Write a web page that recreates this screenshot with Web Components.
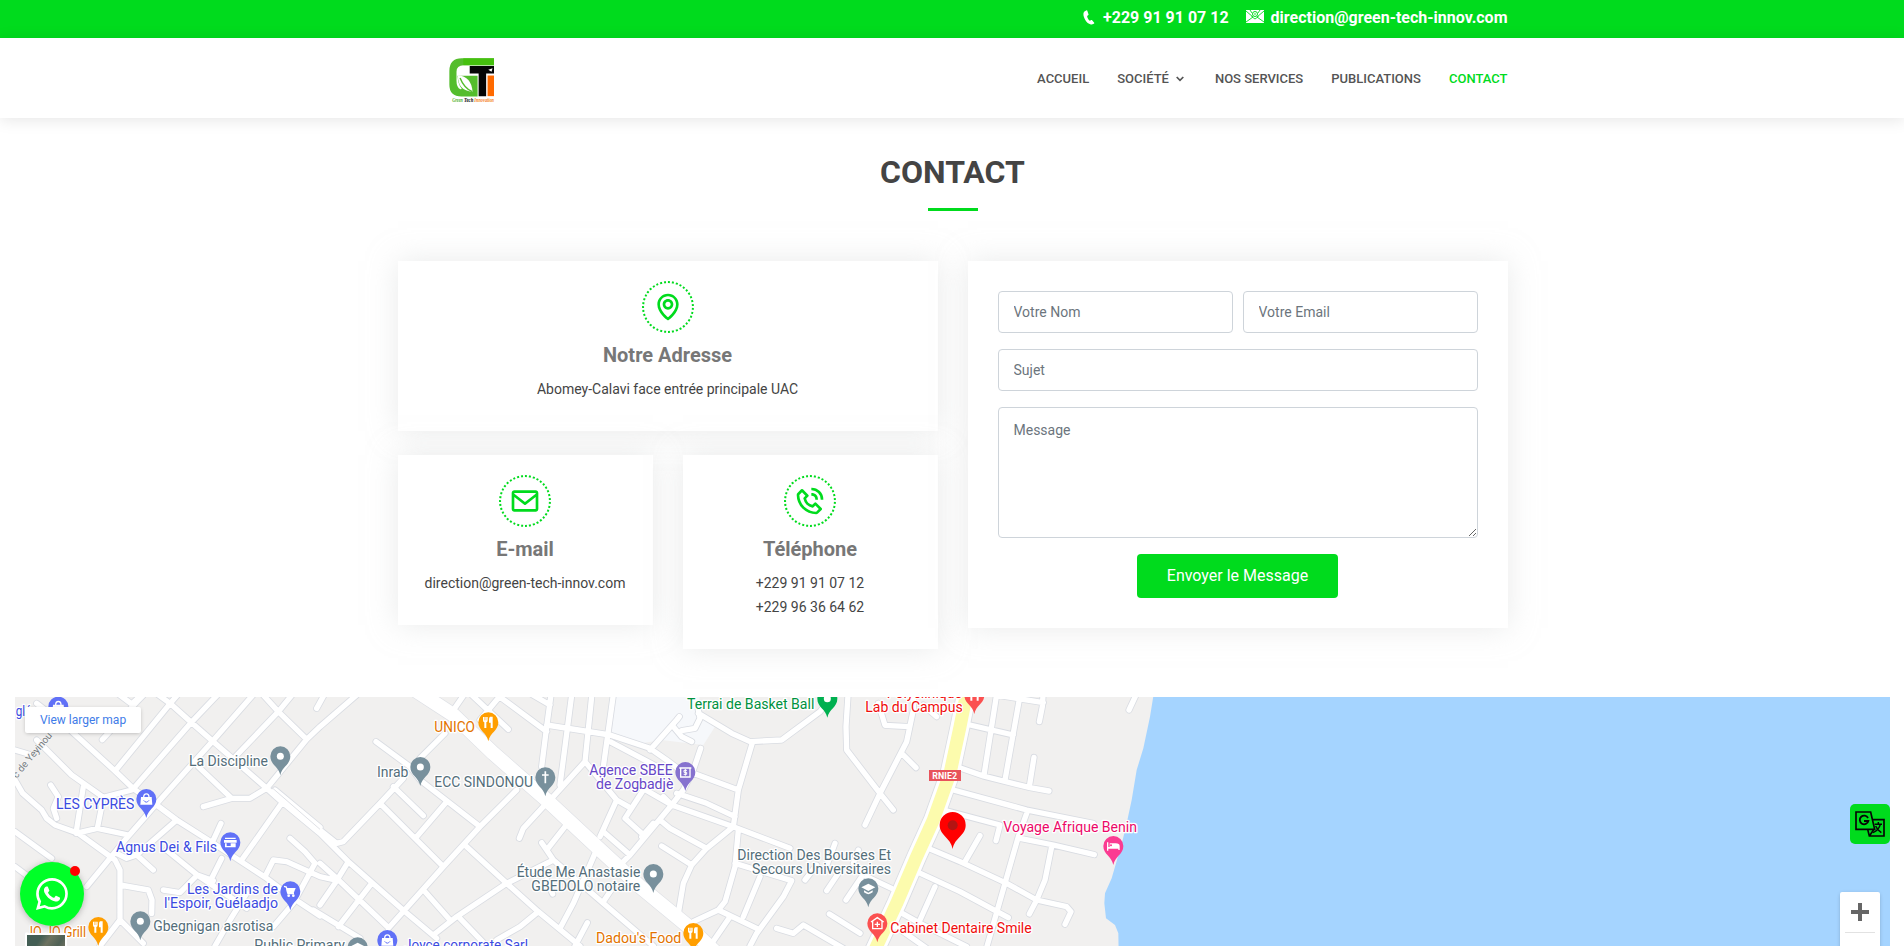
<!DOCTYPE html>
<html lang="fr">
<head>
<meta charset="utf-8">
<title>Green Tech Innovation - Contact</title>
<style>
html{overflow:hidden}
body{margin:0;width:1905px;height:946px;overflow:hidden;background:#fff;color:#444;font:14px/24px Roboto,"Open Sans",sans-serif}
</style>
</head>
<body>
<contact-page></contact-page>
<script>
const GREEN = '#00db1d';
function define(name, render){
  customElements.define(name, class extends HTMLElement{
    connectedCallback(){
      if(this.shadowRoot) return;
      this.attachShadow({mode:'open'}).innerHTML = render(this);
    }
  });
}

define('top-bar', () => `<style>
:host{display:block;height:38px;background:${GREEN};color:#fff}
.in{width:1110px;height:28px;margin:0 auto;display:flex;justify-content:flex-end;align-items:center;font-weight:700;font-size:16px;line-height:28px;padding-top:4px}
svg{flex:none;display:block}
.p{margin:-1px 8px 0 0}.m{margin:-4px 7px 0 17px}
</style><div class="in">
<svg class="p" width="12" height="15" viewBox="0 0 12 15" fill="#fff"><path d="M3.6.3 1.4 1.4C.2 2.2.1 4.700 1 7.300c1.200 3.700 4 6.600 6.800 7.200.8.1 1.800-.1 3.300-1l.3-.5-2.500-3-.6-.1-1.500.9C5.500 10.100 4.300 7.600 4.100 5.900l1.300-.8.2-.5L4.200.5z"/></svg><span>+229 91 91 07 12</span>
<svg class="m" width="18" height="13" viewBox="0 0 18 13"><path fill="#fff" d="M0 0h18v13H0z"/><path d="m0 1 7 6-7 5M18 1l-7 6 7 5M5.500 6.500 9 9l3.500-2.500M4 0l2 3M14 0l-2 3" fill="none" stroke="${GREEN}" stroke-width=".9"/><circle cx="9" cy="4" r="2.500" fill="none" stroke="${GREEN}"/><circle cx="9" cy="4" r=".8" fill="${GREEN}"/></svg><span>direction@green-tech-innov.com</span></div>`);

define('gti-logo', () => `<style>:host{display:block;width:45px;height:45px}svg{display:block;overflow:visible}</style>
<svg width="45" height="45" viewBox="0 0 126 131" preserveAspectRatio="none">
<path d="M126 1H36Q1 1 1 38v40q0 34 34 34h45V52H24q1 26 12 38l-4 1Q21 86 21 66V40q0-19 20-19h85z" fill="#54bd2c"/>
<path d="M40 1h86v20H40z" fill="#45c00e"/><path d="M25 50q38 4 41 48-42-3-41-48z" fill="#fff"/><path d="M31 58q11 29 34 40" fill="none" stroke="#54bd2c" stroke-width="4"/>
<path d="M58 23h68v22h-22v66H83V45H58z" fill="#050505"/><path d="M108 51h18v60h-18z" fill="#ff6a00"/><path d="m110 34 12-4-3 10z" fill="#fff"/>
<g font-family="Liberation Serif,serif" font-style="italic" font-weight="700" font-size="15"><text x="9" y="127" textLength="30" lengthAdjust="spacingAndGlyphs" fill="#4fae25">Green</text><text x="42" y="127" textLength="26" lengthAdjust="spacingAndGlyphs" fill="#000">Tech</text><text x="71" y="127" textLength="55" lengthAdjust="spacingAndGlyphs" fill="#f58220">Innovation</text></g></svg>`);

define('nav-link', el => `<style>:host{display:flex;align-items:center;margin-left:28px;padding-top:2px;font-size:13px;line-height:16px;font-weight:500;text-transform:uppercase;color:#545454;white-space:nowrap}
:host([active]){color:${GREEN}}svg{margin:0 3px 0 7px}</style><slot></slot>${el.hasAttribute('menu')?'<svg width="8" height="6" viewBox="0 0 8 6"><path d="m.7 1 3.300 3.300L7.300 1" fill="none" stroke="currentColor" stroke-width="1.700"/></svg>':''}`);

define('site-header', () => `<style>
:host{display:block;height:80px;background:#fff;box-shadow:0 2px 15px rgba(0,0,0,.1);position:relative}
.in{width:1110px;height:80px;margin:0 auto;display:flex;align-items:center}
gti-logo{margin:5px auto 0 51.500px}
</style><div class="in"><gti-logo></gti-logo><nav-link>Accueil</nav-link><nav-link menu>Société</nav-link><nav-link>Nos Services</nav-link><nav-link>Publications</nav-link><nav-link active>Contact</nav-link></div>`);

define('section-title', () => `<style>
:host{display:flex;flex-direction:column;align-items:center}
h2{margin:0;font-size:32px;line-height:38px;font-weight:700;text-transform:uppercase}
i{width:50px;height:3px;background:${GREEN};margin-top:17px}
</style><h2><slot></slot></h2><i></i>`);

const ICONS = {
 map:'M12 14c2.206 0 4-1.794 4-4s-1.794-4-4-4-4 1.794-4 4 1.794 4 4 4zm0-6c1.103 0 2 .897 2 2s-.897 2-2 2-2-.897-2-2 .897-2 2-2zM11.420 21.814a.998.998 0 0 0 1.160 0C12.884 21.599 20.029 16.440 20 10c0-4.411-3.589-8-8-8S4 5.589 4 9.995c-.029 6.445 7.116 11.604 7.420 11.819zM12 4c3.309 0 6 2.691 6 6.005.021 4.438-4.388 8.423-6 9.730-1.611-1.308-6.021-5.294-6-9.735 0-3.309 2.691-6 6-6z',
 mail:'M20 4H4c-1.103 0-2 .897-2 2v12c0 1.103.897 2 2 2h16c1.103 0 2-.897 2-2V6c0-1.103-.897-2-2-2zm0 2v.511l-8 6.223-8-6.222V6h16zM4 18V9.044l7.386 5.745a.994.994 0 0 0 1.228 0L20 9.044 20.002 18H4z',
 phone:'M16.570 22a2 2 0 0 0 1.430-.59l2.710-2.710a1 1 0 0 0 0-1.410l-4-4a1 1 0 0 0-1.410 0l-1.600 1.590a7.550 7.550 0 0 1-3-1.590 7.620 7.620 0 0 1-1.590-3l1.590-1.600a1 1 0 0 0 0-1.410l-4-4a1 1 0 0 0-1.410 0L2.590 6A2 2 0 0 0 2 7.430 15.280 15.280 0 0 0 6.300 17.700 15.280 15.280 0 0 0 16.570 22zM6 5.410L8.590 8 7.300 9.290a1 1 0 0 0-.3.910 10.120 10.120 0 0 0 2.300 4.500 10.080 10.080 0 0 0 4.500 2.300 1 1 0 0 0 .910-.270L16 15.410 18.590 18l-2 2a13.280 13.280 0 0 1-8.870-3.710A13.280 13.280 0 0 1 4 7.410zM20 11h2a8.810 8.810 0 0 0-9-9v2a6.770 6.770 0 0 1 7 7zM13 8c2.100 0 3 .9 3 3h2c0-3.220-1.780-5-5-5z'
};
define('info-card', el => `<style>
:host{display:flex;flex-direction:column;align-items:center;padding:20px 0 30px;background:#fff;box-shadow:0 0 27px rgba(214,215,216,.5);text-align:center}
.c{box-sizing:border-box;width:52px;height:52px;border:2px dotted ${GREEN};border-radius:50%;padding:8px}
svg{display:block}
h3{margin:10px 0;font-size:20px;line-height:24px;font-weight:700;color:#777}
</style><div class="c"><svg width="32" height="32" viewBox="0 0 24 24" fill="${GREEN}"><path d="${ICONS[el.getAttribute('icon')]}"/></svg></div><h3>${el.getAttribute('heading')}</h3><slot></slot>`);

define('contact-form', () => `<style>
:host{display:block;box-sizing:border-box;background:#fff;padding:30px;box-shadow:0 0 27px rgba(214,215,216,.5)}
form{display:grid;grid-template-columns:1fr 1fr;column-gap:10px;row-gap:16px}
input,textarea{box-sizing:border-box;width:100%;margin:0;border:1px solid #ced4da;border-radius:4px;font:14px/21px Roboto,sans-serif;color:#495057;background:#fff;display:block;outline:0}
input{height:42px;padding:6px 15px}
textarea{height:131px;padding:12px 15px}
::placeholder{color:#6c757d;opacity:1}
.w{grid-column:1/3}
button{grid-column:1/3;justify-self:center;height:44px;padding:10px 30px;border:0;border-radius:4px;background:${GREEN};color:#fff;font:16px/24px Roboto,sans-serif}
</style><form><input placeholder="Votre Nom"><input placeholder="Votre Email"><input class="w" placeholder="Sujet"><textarea class="w" placeholder="Message"></textarea><button type="button">Envoyer le Message</button></form>`);

/* Street map. One map unit is a third of a pixel. */
const ROADS = [
 // west
 'M110 40 195 106 345 243 400 296 470 345 530 390 640 460 800 565 880 625 960 678',
 'M455 0 510 40 575 98 640 155 800 295 845 335 960 430 1045 515 1215 665 1310 745',
 'M307 149 410 36 440 5','M400 296 575 96 655 12','M260 590 375 450 470 341 640 151 765 8',
 'M355 12 395 42 430 10','M345 243 510 41 545 0',
 'M110 150 215 255 310 322 395 300','M45 180 95 195','M45 270 68 310 125 360 140 385 165 405 235 430 345 510 360 540 360 690',
 'M152 285 175 320 160 355 170 385','M250 290 228 430 292 415 385 435','M310 325 292 415',
 'M45 425 155 505','M45 530 85 560','M350 490 380 505 410 495 460 540','M410 495 530 390',
 'M360 585 445 600 456 630 455 670','M490 600 540 608 592 555 640 572','M500 480 592 555 740 655','M663 400 640 450','M665 505 630 575',
 'M610 350 695 325 750 325 800 295 920 148 960 110 1070 15','M595 230 695 325','M785 10 835 65 920 148','M708 198 835 65 880 10',
 'M845 340 725 510','M870 445 915 485 945 520 880 640 820 710','M795 560 820 510 860 515 960 560 1005 570','M825 300 960 412',
 'M740 610 690 690 645 768','M300 768 360 690 430 760','M950 55 975 10',
 // centre west
 'M1350 75 1395 10','M1335 130 1260 205','M1410 10 1525 118','M1515 0 1440 90','M1500 21 1640 125','M1590 10 1650 45',
 'M1655 0 1640 110 1625 230','M1717 0 1680 285','M1777 0 1755 215 1655 325','M1842 0 1810 230',
 'M1640 105 1830 135 1950 175 2000 210 2040 240','M1830 155 1925 205 1990 240','M1755 215 1850 330 1885 350','M1850 330 1800 440',
 'M1930 300 1875 385 1925 430','M1810 425 1890 495','M1990 320 2015 345 1890 495 1865 520',
 'M1128 155 1230 230 1260 270 1440 410','M1180 290 1270 377','M1210 265 1140 340 1030 455 1010 460 960 420',
 'M1140 340 1330 530','M1340 335 1250 440','M1550 300 1440 410 1330 530 1165 715','M1400 470 1520 580 1615 665 1740 768',
 'M1630 350 1570 415 1558 445','M1695 410 1640 480 1625 458','M1640 480 1660 510 1520 580 1370 680 1300 735','M1660 510 1810 640 1960 768',
 'M1785 490 1720 640 1680 715','M1810 635 1840 590','M960 520 1005 560 1160 708','M1045 515 1005 580 960 645','M1115 580 1015 710','M940 660 1080 745',
 'M1275 605 1350 690','M1375 680 1460 768','M1615 665 1560 710 1490 750','M1762 698 1725 768','M1640 570 1658 612',
 // campus
 'M2095 70 2195 130 2250 155 2345 150 2460 65 2480 40','M1950 180 2030 90 2038 80','M2020 110 2045 140 2075 155','M2045 122 2085 115 2100 85 2095 60',
 'M2258 155 2215 300 2200 410','M2102 175 2080 240 2050 300 2015 345','M2080 250 2215 300','M1920 290 2015 345 2200 410 2370 475',
 'M2030 310 2120 340 2205 380','M1980 390 2010 415 2120 475','M2200 410 2120 475 2075 525 2050 580 2035 670','M1985 468 2075 525','M1925 440 1960 400',
 'M2215 420 2205 530 2175 635 2155 660 2080 695','M2205 520 2375 572 2350 620 2270 730 2250 768','M2280 560 2230 680','M2155 660 2270 715','M2190 680 2130 768',
 'M2505 460 2475 540','M2415 570 2450 525','M2480 602 2515 550','M2538 630 2585 560','M2575 480 2560 520','M2600 560 2675 595','M2488 672 2580 730','M2330 715 2380 730 2410 705 2530 775',
 'M2545 0 2538 110 2540 180 2640 310 2680 360','M2740 0 2740 60 2720 155 2640 310 2595 405','M2705 190 2748 233','M2635 40 2655 106 2728 110','M2770 45 2810 80',
 // lake side
 'M2992 0 2952 255','M3063 0 3015 270','M2990 15 3130 38','M3130 0 3127 50 3118 95','M2910 105 3040 135',
 'M2870 230 2950 258 3090 293 3147 303','M3102 202 3088 290','M3415 0 3387 60','M2860 300 3080 360 3280 400','M2830 360 3000 405 2988 452',
 'M2940 437 2895 515','M2785 475 2880 515 3020 580 3110 630 3200 650 3213 665 3195 703','M3080 370 3055 440 3015 580 2955 790','M3060 445 3160 465 3283 494',
 'M3155 470 3135 570 3110 630 3088 672','M2750 545 2880 605 3025 683','M2805 590 2760 690','M2680 655 2760 700 2900 770','M2660 690 2780 775'
].join('');
const PIN = 'M0 57C-5 30-30 26-30 0A30 30 0 0 1 30 0C30 26 5 30 0 57Z';
const GL = {
 dot:'<circle r="10.500" fill="#fff"/>',
 bag:'<path fill="#fff" d="M-16-6h32l2 23h-36z"/><path d="M-8-5c0-14 16-14 16 0" fill="none" stroke="#fff" stroke-width="4"/><path d="M-8 4q8 11 16 0" fill="none" stroke="#6171f7" stroke-width="3"/>',
 shop:'<path fill="#fff" d="M-16-14h32v4h-32zM-19-7h38v8h-38zM-16 3h5v8H1V3h15v12h-32z"/>',
 cart:'<path fill="#fff" d="M-12-10h28l-6 16h-20z"/><path d="m-19-15 7 2 5 20h18" fill="none" stroke="#fff" stroke-width="4"/><circle cx="-5" cy="13" r="4" fill="#fff"/><circle cx="9" cy="13" r="4" fill="#fff"/>',
 fork:'<path fill="#fff" d="M-16-16h14v10q0 6-4 6v17h-6V0q-4 0-4-6zM5-17h8v34H7V1H2v-11q0-5 3-7z"/><path d="M-11-16v10M-7-16v10" stroke="#ff9e00" stroke-width="1.500"/>',
 cross:'<path d="M0-18v36M-10-7h20" stroke="#fff" stroke-width="5"/>',
 grad:'<path fill="#fff" d="m0-14 21 11L0 8l-21-11zM-13 6 0 13 13 6v6Q0 23-13 12z"/>',
 bank:'<path d="M-14-12v27h28v-27M-18-12h36" fill="none" stroke="#fff" stroke-width="4"/><path d="M5-5h-9v6h8v6h-9M0-9v20" fill="none" stroke="#fff" stroke-width="3"/>',
 med:'<path d="M-14-6v22h28V-6M-19-4 0-17 19-4" fill="none" stroke="#fff" stroke-width="4"/><path d="M0-5v16M-8 3H8" stroke="#fff" stroke-width="4"/>',
 bed:'<path fill="#fff" d="M-19-11h4V3h4v-11h18q12 0 12 8v12h-4V8h-30v6h-4z"/><circle cx="-7" cy="-2" r="3" fill="#fb3b92"/>'
};
const C={grey:['#78909c','#546e7a'],blue:['#6171f7','#3c4bdf'],orange:['#ff9e00','#e37400'],violet:['#8672cf','#6747c7'],green:['#00b050','#00923f'],red:['#fb5050','#ef0d0d'],pink:['#fb3b92','#ec0868']};
const PINS=[[175,50,'blue','bag'],[841,199,'grey','dot'],[439,327,'blue','bag'],[691,457,'blue','shop'],[871,604,'blue','cart'],[421,694,'grey','dot'],[295,711,'orange','fork'],
[1465,97,'orange','fork'],[1261,231,'grey','dot'],[1636,262,'grey','cross'],[1073,772,'grey','grad'],[1162,750,'blue','bag'],[2482,26,'green','dot'],[2056,246,'violet','bank'],
[1960,552,'grey','dot'],[2080,729,'orange','fork'],[2605,595,'grey','grad'],[2632,700,'red','med'],[2923,15,'red','fork'],[3340,468,'pink','bed']];
const LABELS=[[47,79,65,'blue','glés'],[567,228,237,'grey','La Discipline'],[168,357,235,'blue','LES CYPRÈS'],[348,486,303,'blue','Agnus Dei &amp; Fils'],[561,612,273,'blue','Les Jardins de'],[492,654,342,'blue',"l'Espoir, Guélaadjo"],
[460,724,360,'grey','Gbegnigan asrotisa'],[78,741,180,'orange','JO JO Grill'],[763,780,272,'grey','Public Primary'],[1303,126,162,'orange','UNICO'],[1131,261,94,'grey','Inrab'],[1303,291,296,'grey','ECC SINDONOU'],
[1768,256,250,'violet','Agence SBEE'],[1788,297,232,'violet','de Zogbadjè'],[1550,561,371,'grey','Étude Me Anastasie'],[1594,603,327,'grey','GBEDOLO notaire'],[1212,780,372,'blue','Joyce corporate Sarl'],[1788,759,256,'orange',"Dadou's Food"],
[2061,57,382,'green','Terrai de Basket Ball'],[2660,24,226,'red','Polyclinique'],[2596,66,292,'red','Lab du Campus'],[2212,510,461,'grey','Direction Des Bourses Et'],[2256,552,417,'grey','Secours Universitaires'],[2671,729,424,'red','Cabinet Dentaire Smile'],[3010,426,401,'pink','Voyage Afrique Benin']];
LABELS.find(l=>l[4]==='UNICO')[2]=122;

define('street-map', () => `<style>:host{display:block}svg{display:block}</style>
<svg width="1875" height="249" viewBox="45 21 5625 747" font-family="Roboto,sans-serif">
<rect x="45" y="21" width="5625" height="747" fill="#f1f0ef"/>
<path d="M1845 0 1835 130 1925 160 1985 150 2110 165 2145 110 2095 65 2100 0Z" fill="#f6f8fb"/>
<path d="M3463 0 3450 80 3430 175 3410 240 3395 330 3380 400 3368 450 3345 530 3335 565 3315 610 3313 640 3318 685 3345 705 3355 730 3356 790H5700V0Z" fill="#a5d4ff"/>
<g fill="none" stroke-linecap="round" stroke-linejoin="round">
<path d="${ROADS}" stroke="#d9dce2" stroke-width="21"/>
<path d="M1245 0 1360 75 1480 190 1640 330 1790 470 1920 590 2060 705 2150 790" stroke="#dfe1e6" stroke-width="46"/>
<path d="M2902 0 2880 110 2850 250 2800 390 2750 500 2690 640 2620 790" stroke="#d9dce2" stroke-width="62"/>
<path d="${ROADS}" stroke="#fff" stroke-width="16"/>
<path d="M1245 0 1360 75 1480 190 1640 330 1790 470 1920 590 2060 705 2150 790" stroke="#fff" stroke-width="42"/>
<path d="M2902 0 2880 110 2850 250 2800 390 2750 500 2690 640 2620 790" stroke="#fff" stroke-width="57"/>
<path d="M2902 0 2880 110 2850 250 2800 390 2750 500 2690 640 2620 790" stroke="#fcfbad" stroke-width="39"/></g>
<path d="M815 292 960 418" stroke="#dfe1e6" stroke-width="3"/>
<rect x="2787" y="240" width="96" height="33" fill="#e8535b"/><text x="2797" y="266" font-size="25" font-weight="700" fill="#fff" textLength="74" lengthAdjust="spacingAndGlyphs">RNIE2</text>
<text transform="translate(50 266) rotate(-50)" font-size="30" fill="#757b80" textLength="168" lengthAdjust="spacingAndGlyphs" stroke="#f5f5f5" stroke-width="5" paint-order="stroke">c de Yeyinou</text>
${PINS.map(p=>`<g transform="translate(${p[0]} ${p[1]})"><path d="${PIN}" fill="${C[p[2]][0]}"/>${GL[p[3]]}</g>`).join('')}
<g font-size="44" stroke="#fff" stroke-width="8" stroke-linejoin="round" paint-order="stroke">${LABELS.map(l=>`<text x="${l[0]}" y="${l[1]}" textLength="${l[2]}" lengthAdjust="spacingAndGlyphs" fill="${C[l[3]][1]}">${l[4]}</text>`).join('')}</g>
<path d="M2858 477C2852 442 2819 438 2819 405A39 39 0 0 1 2897 405C2897 438 2864 442 2858 477Z" fill="#f00"/><circle cx="2858" cy="406" r="15" fill="#b31412"/>
</svg>`);

define('map-panel', () => `<style>
:host{display:block;position:relative;margin:0 15px;height:249px}
.big{position:absolute;left:10px;top:10px;width:116px;height:26px;background:#fff;border-radius:2px;box-shadow:0 1px 4px -1px rgba(0,0,0,.3);color:#3f7ce8;font-size:12px;line-height:26px;text-align:center}
.sat{position:absolute;box-sizing:border-box;left:10px;top:236px;width:42px;height:40px;border:2px solid #fff;border-radius:2px;background:linear-gradient(125deg,#435e54 0 25%,#6d7260 40%,#4f6155 60%,#8b7c69 85%)}
.zoom{position:absolute;left:1825px;top:195px;width:40px;height:81px;background:#fff;border-radius:2px;box-shadow:0 1px 4px -1px rgba(0,0,0,.3)}
.zoom svg{display:block}
</style><street-map></street-map><div class="big">View larger map</div><div class="sat"></div>
<div class="zoom"><svg width="40" height="54" viewBox="0 0 40 54"><path d="M18 11h4v7h7v4h-7v7h-4v-7h-7v-4h7z" fill="#666"/><path d="M5 40h30v1H5z" fill="#e2e2e2"/></svg></div>`);

define('whatsapp-button', () => `<style>
:host{position:absolute;left:20px;top:862px;width:64px;height:64px;border-radius:50%;background:#00ff28;box-shadow:0 1px 6px rgba(60,60,60,.35);display:flex;align-items:center;justify-content:center}
b{position:absolute;left:50px;top:4px;width:10px;height:10px;border-radius:50%;background:#f00}
</style><svg width="32" height="32" viewBox="0 0 16 16" fill="#fff"><path d="M13.601 2.326A7.854 7.854 0 0 0 7.994 0C3.627 0 .068 3.558.064 7.926c0 1.399.366 2.760 1.057 3.965L0 16l4.204-1.102a7.933 7.933 0 0 0 3.790.965h.004c4.368 0 7.926-3.558 7.930-7.930A7.898 7.898 0 0 0 13.600 2.326zM7.994 14.521a6.573 6.573 0 0 1-3.356-.920l-.240-.144-2.494.654.666-2.433-.156-.251a6.560 6.560 0 0 1-1.007-3.505c0-3.626 2.957-6.584 6.591-6.584a6.560 6.560 0 0 1 4.660 1.931 6.557 6.557 0 0 1 1.928 4.660c-.004 3.639-2.961 6.592-6.592 6.592zm3.615-4.934c-.197-.099-1.170-.578-1.353-.646-.182-.065-.315-.099-.445.099-.133.197-.513.646-.627.775-.114.133-.232.148-.430.050-.197-.100-.836-.308-1.592-.985-.590-.525-.985-1.175-1.103-1.372-.114-.198-.011-.304.088-.403.087-.088.197-.232.296-.346.100-.114.133-.198.198-.330.065-.134.034-.248-.015-.347-.050-.099-.445-1.076-.612-1.470-.160-.389-.323-.335-.445-.340-.114-.007-.247-.007-.380-.007a.729.729 0 0 0-.529.247c-.182.198-.691.677-.691 1.654 0 .977.710 1.916.810 2.049.098.133 1.394 2.132 3.383 2.992.470.205.840.326 1.129.418.475.152.904.129 1.246.080.380-.058 1.171-.480 1.338-.943.164-.464.164-.860.114-.943-.049-.084-.182-.133-.380-.232z"/></svg><b></b>`);

define('translate-button', () => `<style>
:host{position:absolute;left:1850px;top:804px;width:40px;height:40px;border-radius:5px;background:${GREEN}}svg{display:block}
</style><svg width="40" height="40" viewBox="0 0 120 120" fill="none" stroke="#050505" stroke-width="5"><path d="M18 24h44l12 52H18zM68 47h34v49H58l-5-20M58 96l14-20"/><path d="M54 42a13 13 0 1 0 1 9H42" stroke-width="5.500"/><path d="M74 61h22M85 54v7M91 61q-5 18-22 25M77 66q5 13 17 20" stroke-width="4.500"/></svg>`);

define('contact-page', () => `<style>
:host{display:block}
section-title{margin-top:35px}
main{display:grid;grid-template-columns:540px 540px;column-gap:30px;width:1110px;margin:50px auto 0;align-items:start}
.cards{display:grid;grid-template-columns:255px 255px;gap:24px 30px;align-items:start}
.wide{grid-column:1/3}
map-panel{margin-top:48px}
</style><top-bar></top-bar><site-header></site-header><section-title>Contact</section-title>
<main><div class="cards"><info-card class="wide" icon="map" heading="Notre Adresse"><span>Abomey-Calavi face entrée principale UAC</span></info-card>
<info-card icon="mail" heading="E-mail"><span>direction@green-tech-innov.com</span></info-card>
<info-card icon="phone" heading="Téléphone"><span>+229 91 91 07 12</span><span>+229 96 36 64 62</span></info-card></div>
<contact-form></contact-form></main>
<map-panel></map-panel><whatsapp-button></whatsapp-button><translate-button></translate-button>`);
</script>
</body>
</html>
